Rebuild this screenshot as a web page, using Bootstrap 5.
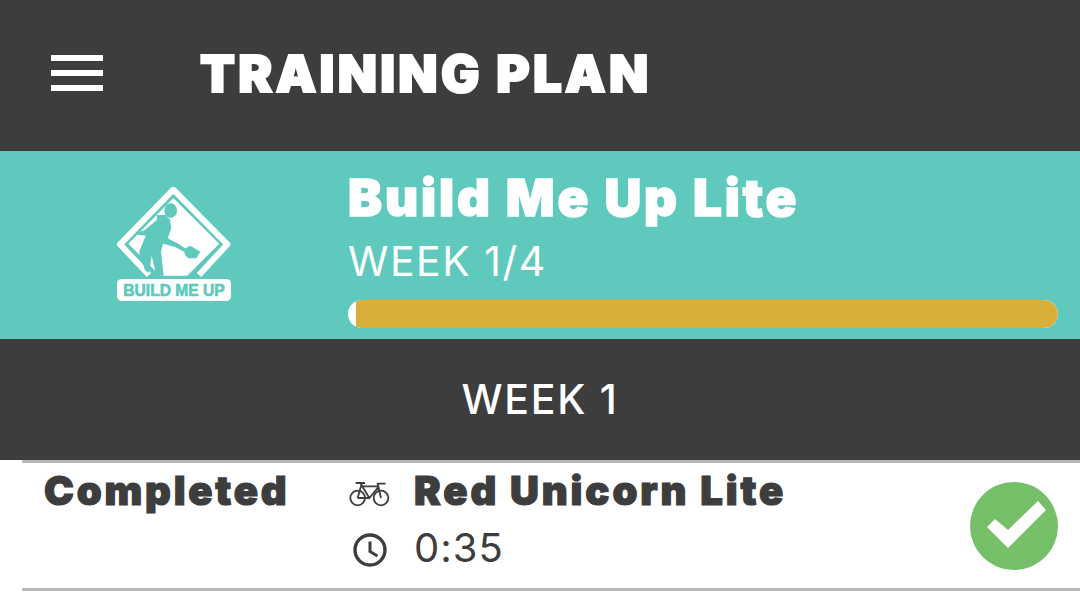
<!DOCTYPE html>
<html lang="en">

<head>
    <meta charset="UTF-8" />
    <meta name="viewport" content="width=device-width, initial-scale=1.0" />
    <title>Training Plan</title>
    <link href="https://cdn.jsdelivr.net/npm/bootstrap@5.3.3/dist/css/bootstrap.min.css" rel="stylesheet">
    <style>
        body {
            background: #fff;
            color: #3d3d3d;
            font-family: "Inter", "Liberation Sans", sans-serif;
            overflow: hidden;
        }

        .top-bar {
            height: 151px;
            background: #3d3d3d;
            padding: 0 0 6px 51px;
        }

        .menu-icon {
            width: 52px;
            margin-right: 97px;
            gap: 9px;
        }

        .menu-icon span {
            height: 6px;
            background: #fff;
        }

        .page-title {
            font-size: 51px;
            font-weight: 900;
            letter-spacing: 3.3px;
            line-height: 1;
            margin-top: 2px;
            -webkit-text-stroke: 2px #fff;
        }

        .plan-band {
            height: 188px;
            background: #5ec9bc;
        }

        .plan-logo {
            width: 348px;
            padding-left: 116px;
        }

        .plan-info {
            padding: 19px 22px 11px 0;
        }

        .plan-name {
            font-size: 51px;
            font-weight: 900;
            letter-spacing: 2.9px;
            line-height: 56px;
            -webkit-text-stroke: 1.5px #fff;
        }

        .plan-week {
            font-size: 41px;
            font-weight: 400;
            letter-spacing: 1.5px;
            line-height: 50px;
            margin-top: 10px;
        }

        .plan-progress {
            height: 28px;
            border-radius: 14px;
            background: #fff;
            margin-top: 14px;
        }

        .plan-progress .progress-bar {
            background: #d9af3b;
            border-radius: 0 14px 14px 0;
        }

        .week-bar {
            height: 121px;
            background: #3d3d3d;
            font-size: 41px;
            font-weight: 500;
            letter-spacing: 1.7px;
        }

        .workout-row {
            height: 131px;
            margin-left: 22px;
            border-top: 3px solid #b8b8b8;
            border-bottom: 3px solid #b8b8b8;
        }

        .workout-status {
            width: 326px;
            padding-left: 22px;
            font-size: 40px;
            font-weight: 900;
            letter-spacing: 2.8px;
            line-height: 56px;
            -webkit-text-stroke: 1.2px #3d3d3d;
        }

        .workout-info {
            font-size: 40px;
        }

        .info-line {
            height: 56px;
        }

        .info-icon {
            width: 66px;
            padding-left: 1px;
        }

        .clock-icon {
            padding-left: 5px;
        }

        .workout-name {
            font-weight: 900;
            letter-spacing: 2.9px;
            -webkit-text-stroke: 1.2px #3d3d3d;
        }

        .workout-time {
            letter-spacing: 1px;
            margin-top: 2px;
        }

        .done-mark {
            margin-right: 22px;
        }

        .done-mark svg {
            display: block;
        }
    </style>
</head>

<body>
    <header class="top-bar d-flex align-items-center text-white">
        <div class="menu-icon d-flex flex-column flex-shrink-0">
            <span class="d-block"></span>
            <span class="d-block"></span>
            <span class="d-block"></span>
        </div>
        <div class="page-title">TRAINING PLAN</div>
    </header>

    <section class="plan-band d-flex text-white">
        <div class="plan-logo flex-shrink-0 d-flex align-items-center">
            <svg width="116" height="116" viewBox="-27 -24 348 348">
                <!-- sign ring, open at the bottom -->
                <path fill="none" stroke="#fff" stroke-width="18" stroke-linejoin="round"
                    d="M72 240 L-15 148 L145 -16 L307 148 L222 240" />
                <!-- inner diamond -->
                <path fill="#fff" stroke="#fff" stroke-width="4" stroke-linejoin="round"
                    d="M145 12 L280 146 L186 240 L106 240 L13 146 Z" />
                <!-- worker -->
                <ellipse cx="137" cy="47" rx="19" ry="22" fill="#5ec9bc" />
                <path fill="#5ec9bc"
                    d="M95 60 L122 60 L135 74 L139 100 L128 130 L160 146 L186 164 L180 172 L150 156 L114 146 L108 170 L116 242 L94 242 L80 182 L72 234 L60 226 L42 172 L62 122 L28 118 L60 104 L80 88 L96 74 Z" />
                <path fill="#5ec9bc" d="M177 162 L196 152 L226 170 L214 190 L190 190 L180 180 Z" />
                <!-- label -->
                <rect x="-24" y="252" width="342" height="66" rx="14" fill="#fff" />
                <text transform="translate(147 303) scale(.9 1)" text-anchor="middle" fill="#5ec9bc"
                    font-family="Liberation Sans, sans-serif" font-size="52" font-weight="700" stroke="#5ec9bc"
                    stroke-width="2">BUILD ME UP</text>
            </svg>
        </div>
        <div class="plan-info flex-grow-1">
            <div class="plan-name">Build Me Up Lite</div>
            <div class="plan-week">WEEK 1/4</div>
            <div class="progress plan-progress">
                <div class="progress-bar ms-2 flex-grow-1"></div>
            </div>
        </div>
    </section>

    <section class="week-bar d-flex align-items-center justify-content-center text-white">WEEK 1</section>

    <div class="workout-row d-flex">
        <div class="workout-status flex-shrink-0">Completed</div>
        <div class="workout-info flex-grow-1">
            <div class="info-line d-flex align-items-center">
                <div class="info-icon">
                    <svg width="42" height="26" viewBox="12 9 126 78" fill="none" stroke="#3d3d3d" stroke-width="5.5">
                        <circle cx="38" cy="60" r="22" />
                        <circle cx="108" cy="60" r="22" />
                        <path d="M38 60 L50 17 M32 15 H60 M50 25 H102 M47 17 L73 60 L102 25 M38 60 H73 M108 60 L98 17 H122" />
                    </svg>
                </div>
                <div class="workout-name">Red Unicorn Lite</div>
            </div>
            <div class="info-line d-flex align-items-center">
                <div class="info-icon clock-icon">
                    <svg width="34" height="34" viewBox="0 0 34 34" fill="none" stroke="#3d3d3d">
                        <circle cx="17" cy="17" r="15" stroke-width="3.4" />
                        <path d="M17 8.5 V18.5 L24.5 23" stroke-width="3" />
                    </svg>
                </div>
                <div class="workout-time">0:35</div>
            </div>
        </div>
        <div class="done-mark align-self-center">
            <svg width="88" height="88" viewBox="0 0 88 88">
                <circle cx="44" cy="44" r="44" fill="#74bf68" />
                <path fill="#fff" d="M17 45 L25 37 L38 48 L68 19 L76 28 L38 66 Z" />
            </svg>
        </div>
    </div>

    <script src="https://cdn.jsdelivr.net/npm/bootstrap@5.3.3/dist/js/bootstrap.bundle.min.js"></script>
</body>

</html>
